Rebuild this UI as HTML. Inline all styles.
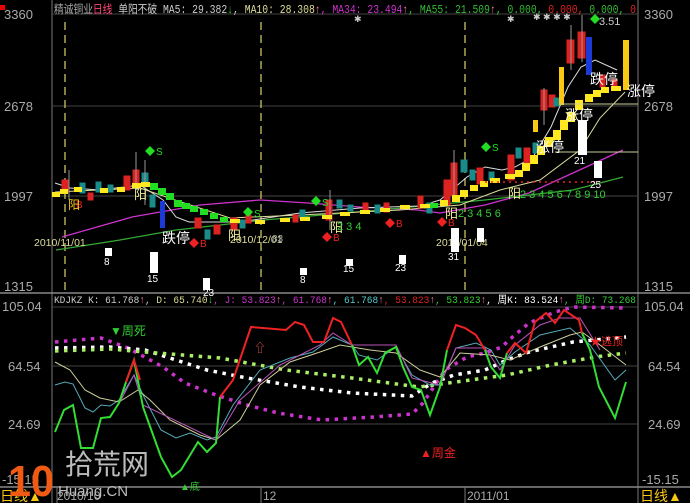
<!DOCTYPE html>
<html><head><meta charset="utf-8"><style>
body{margin:0;background:#000;width:690px;height:503px;overflow:hidden}
svg{display:block}
text{font-family:"Liberation Sans","Noto Sans CJK SC",sans-serif}
.m{font-family:"Liberation Mono","Noto Sans CJK SC",monospace}
</style></head><body>
<svg width="690" height="503" viewBox="0 0 690 503" xmlns="http://www.w3.org/2000/svg">
<rect width="690" height="503" fill="#000"/>
<line x1="52" y1="0" x2="52" y2="503" stroke="#777" stroke-width="1"/>
<line x1="638" y1="0" x2="638" y2="503" stroke="#777" stroke-width="1"/>
<line x1="0" y1="293" x2="690" y2="293" stroke="#888" stroke-width="1.5"/>
<line x1="0" y1="487" x2="690" y2="487" stroke="#888" stroke-width="1.5"/>
<g stroke="#444" stroke-width="1">
<line x1="52" y1="14" x2="638" y2="14"/>
<line x1="52" y1="106" x2="638" y2="106"/>
<line x1="52" y1="196" x2="638" y2="196"/>
<line x1="52" y1="307" x2="638" y2="307"/>
<line x1="52" y1="366" x2="638" y2="366"/>
<line x1="52" y1="424" x2="638" y2="424"/>
</g>
<g stroke="#dcd36a" stroke-width="1.2" stroke-dasharray="8 5">
<line x1="65" y1="22" x2="65" y2="293"/>
<line x1="261" y1="22" x2="261" y2="293"/>
<line x1="465" y1="22" x2="465" y2="293"/>
</g>
<g stroke="#777"><line x1="261" y1="487" x2="261" y2="503"/><line x1="465" y1="487" x2="465" y2="503"/><line x1="57" y1="487" x2="57" y2="503"/></g>
<g class="m" font-size="13" fill="#aaa">
<text x="4" y="19">3360</text><text x="4" y="111">2678</text><text x="4" y="201">1997</text><text x="4" y="291">1315</text>
<text x="644" y="19">3360</text><text x="644" y="111">2678</text><text x="644" y="201">1997</text><text x="644" y="291">1315</text>
<text x="2" y="311">105.04</text><text x="8" y="371">64.54</text><text x="8" y="429">24.69</text><text x="2" y="484">-15.15</text>
<text x="644" y="311">105.04</text><text x="648" y="371">64.54</text><text x="648" y="429">24.69</text><text x="642" y="484">-15.15</text>
</g>
<rect x="0" y="5" width="5" height="5" fill="#e00"/>
<text class="m" x="54" y="13" font-size="11.5" textLength="582" lengthAdjust="spacingAndGlyphs"><tspan fill="#aaa">精诚铜业</tspan><tspan fill="#f47">日线</tspan><tspan fill="#ccc"> 单阳不破 MA5: 29.382</tspan><tspan fill="#3c3">↓</tspan><tspan fill="#ccc">,</tspan><tspan fill="#dd9"> MA10: 28.308</tspan><tspan fill="#f7a">↑</tspan><tspan fill="#c3c">, MA34: 23.494</tspan><tspan fill="#f7a">↑</tspan><tspan fill="#3b3">, MA55: 21.509</tspan><tspan fill="#f7a">↑</tspan><tspan fill="#3b3">, 0.000,</tspan><tspan fill="#d22"> 0.000,</tspan><tspan fill="#3b3"> 0.000,</tspan><tspan fill="#d22"> 0</tspan></text>
<polyline fill="none" stroke="#c3c" stroke-width="1.3" points="62,237 132,217 200,205 260,200 308,203 360,207 418,210 440,213 485,205 529,193 573,173 623,150"/>
<polyline fill="none" stroke="#3a3" stroke-width="1.3" points="56,250 120,240 176,230 264,220 380,210 485,200 573,190 623,177"/>
<polyline fill="none" stroke="#ddd" stroke-width="1" points="55,183 70,188 100,190 140,185 163,200 176,217 189,222 210,222 240,222 300,213 360,208 420,206 440,200 467,177 485,167 502,170 515,167 533,157 551,127 568,87 581,67 595,60 617,70"/>
<polyline fill="none" stroke="#dd9" stroke-width="1" points="55,192 140,188 175,200 230,218 300,215 400,210 460,205 500,190 540,180 580,150 600,118 625,92"/>
<g>
<g fill="#d22" stroke="#d22">
<rect x="62" y="180" width="6" height="12"/><rect x="88" y="193" width="5" height="7"/><rect x="124" y="176" width="6" height="14"/><rect x="133" y="170" width="6" height="14"/>
<rect x="195" y="218" width="6" height="10"/><rect x="214" y="225" width="6" height="9"/><rect x="231" y="218" width="6" height="12"/><rect x="246" y="215" width="5" height="8"/>
<rect x="293" y="215" width="5" height="7"/><rect x="326" y="200" width="6" height="20"/><rect x="363" y="203" width="5" height="10"/><rect x="384" y="203" width="5" height="9"/>
<rect x="418" y="196" width="5" height="12"/><rect x="444" y="180" width="6" height="25"/><rect x="451" y="163" width="6" height="32"/><rect x="477" y="168" width="6" height="16"/>
<rect x="508" y="155" width="6" height="25"/><rect x="524" y="148" width="6" height="18"/><rect x="541" y="90" width="6" height="20"/><rect x="549" y="95" width="6" height="12"/>
<rect x="567" y="40" width="7" height="23"/><rect x="578" y="32" width="7" height="26"/><rect x="600" y="75" width="5" height="12"/><rect x="612" y="80" width="5" height="8"/>
</g>
<g fill="#1a8a8a" stroke="#1a8a8a">
<rect x="80" y="183" width="5" height="10"/><rect x="96" y="182" width="5" height="10"/><rect x="108" y="185" width="5" height="7"/><rect x="142" y="173" width="6" height="12"/>
<rect x="150" y="195" width="5" height="12"/><rect x="205" y="230" width="5" height="9"/><rect x="240" y="220" width="5" height="8"/><rect x="300" y="210" width="5" height="9"/>
<rect x="337" y="200" width="5" height="8"/><rect x="348" y="205" width="5" height="6"/><rect x="375" y="205" width="5" height="8"/><rect x="427" y="203" width="5" height="10"/>
<rect x="461" y="160" width="6" height="12"/><rect x="470" y="170" width="5" height="10"/><rect x="489" y="172" width="5" height="8"/><rect x="516" y="148" width="5" height="10"/><rect x="533" y="143" width="5" height="10"/><rect x="554" y="98" width="5" height="8"/>
</g>
<g stroke="#999" stroke-width="1">
<line x1="69" y1="170" x2="69" y2="200"/><line x1="136" y1="152" x2="136" y2="190"/><line x1="145" y1="160" x2="145" y2="205"/><line x1="330" y1="190" x2="330" y2="230"/><line x1="454" y1="150" x2="454" y2="200"/><line x1="544" y1="88" x2="544" y2="125"/><line x1="571" y1="25" x2="571" y2="70"/><line x1="582" y1="15" x2="582" y2="62"/>
</g>
<rect x="586" y="37" width="6" height="38" fill="#1c3ad8"/>
<rect x="160" y="201" width="5" height="27" fill="#1c3ad8"/>
<g fill="#f8c812"><rect x="559" y="67" width="5" height="38"/><rect x="623" y="40" width="6" height="50"/><rect x="533" y="120" width="5" height="12"/></g>
</g>
<g fill="#ffe820">
<rect x="52" y="192" width="8" height="5"/><rect x="60" y="189" width="8" height="5"/><rect x="74" y="187" width="8" height="5"/><rect x="100" y="188" width="8" height="5"/><rect x="117" y="187" width="8" height="5"/><rect x="132" y="183" width="9" height="5"/><rect x="141" y="182" width="9" height="5"/>
<rect x="230" y="219" width="10" height="4"/><rect x="255" y="220" width="10" height="4"/><rect x="280" y="218" width="10" height="4"/><rect x="300" y="217" width="10" height="4"/><rect x="322" y="215" width="10" height="4"/><rect x="340" y="212" width="10" height="4"/><rect x="360" y="210" width="10" height="4"/><rect x="380" y="208" width="10" height="4"/><rect x="400" y="205" width="10" height="4"/><rect x="420" y="204" width="10" height="4"/><rect x="440" y="200" width="8" height="6"/>
<rect x="452" y="195" width="8" height="7"/><rect x="460" y="190" width="8" height="7"/><rect x="470" y="185" width="8" height="6"/><rect x="480" y="181" width="8" height="6"/><rect x="490" y="178" width="10" height="5"/><rect x="505" y="174" width="10" height="5"/>
<rect x="515" y="170" width="8" height="7"/><rect x="522" y="163" width="8" height="8"/><rect x="530" y="155" width="8" height="9"/><rect x="537" y="146" width="8" height="9"/><rect x="545" y="137" width="8" height="10"/><rect x="553" y="130" width="8" height="10"/><rect x="560" y="120" width="8" height="10"/><rect x="567" y="112" width="8" height="10"/><rect x="575" y="100" width="8" height="10"/><rect x="585" y="94" width="8" height="8"/><rect x="593" y="90" width="8" height="7"/><rect x="601" y="87" width="8" height="6"/><rect x="611" y="86" width="10" height="5"/>
</g>
<g fill="#22dd22">
<rect x="150" y="183" width="8" height="7"/><rect x="158" y="188" width="8" height="7"/><rect x="166" y="193" width="8" height="7"/><rect x="174" y="200" width="8" height="7"/><rect x="182" y="203" width="8" height="6"/><rect x="190" y="206" width="8" height="6"/><rect x="200" y="209" width="8" height="6"/><rect x="210" y="213" width="8" height="6"/><rect x="220" y="217" width="8" height="5"/><rect x="430" y="203" width="8" height="5"/>
</g>
<g stroke="#ccc" stroke-width="1"><line x1="560" y1="104" x2="638" y2="104" stroke="#cc9"/><line x1="555" y1="152" x2="638" y2="152" stroke="#cc9"/></g>
<line x1="485" y1="182" x2="600" y2="182" stroke="#e22" stroke-dasharray="2 4" stroke-width="1.5"/>
<g fill="#2d2"><path d="M150 146l5 5-5 5-5-5z"/><path d="M486 142l5 5-5 5-5-5z"/><path d="M248 207l5 5-5 5-5-5z"/><path d="M316 196l5 5-5 5-5-5z"/><path d="M595 14l5 5-5 5-5-5z"/></g>
<g fill="#2d2" font-size="10"><text x="156" y="155">S</text><text x="492" y="151">S</text><text x="254" y="217">S</text><text x="322" y="206">S</text></g>
<g fill="#e22"><path d="M194 238l5 5-5 5-5-5z"/><path d="M327 232l5 5-5 5-5-5z"/><path d="M390 218l5 5-5 5-5-5z"/><path d="M442 217l5 5-5 5-5-5z"/></g>
<g fill="#e22" font-size="10"><text x="200" y="247">B</text><text x="333" y="241">B</text><text x="396" y="227">B</text><text x="448" y="226">B</text><text x="76" y="208">B</text></g>
<g font-size="13"><text x="68" y="209" fill="#f8c812" font-size="12">阳</text><text x="134" y="199" fill="#ee9">阳</text><text x="228" y="240" fill="#ee9">阳</text><text x="330" y="232" fill="#ee9">阳</text><text x="445" y="218" fill="#ee9">阳</text><text x="508" y="198" fill="#ee9">阳</text>
<text x="162" y="243" fill="#fff" font-size="14">跌停</text><text x="590" y="84" fill="#fff" font-size="14">跌停</text><text x="627" y="96" fill="#fff" font-size="14">涨停</text><text x="565" y="120" fill="#fff" font-size="14">涨停</text><text x="536" y="152" fill="#fff" font-size="14">涨停</text></g>
<g fill="#3c3" font-size="11" class="m"><text x="337" y="230">2 3 4</text><text x="458" y="217">2 3 4 5 6</text><text x="520" y="198">2 3 4 5 6 7 8 9 10</text></g>
<g fill="#dd9" font-size="10.5" class="m"><text x="34" y="246">2010/11/01</text><text x="230" y="243">2010/12/01</text><text x="436" y="246">2011/01/04</text></g>
<text x="272" y="242" fill="#aaa" font-size="10">83</text>
<text x="599" y="25" fill="#ccc" font-size="11">3.51</text>
<g fill="#ccc" font-size="9"><text x="354" y="22">✱</text><text x="507" y="22">✱</text><text x="533" y="20">✱ ✱ ✱ ✱</text></g>
<g fill="#fff"><rect x="105" y="248" width="7" height="8"/><rect x="150" y="252" width="8" height="21"/><rect x="203" y="278" width="7" height="12"/><rect x="300" y="268" width="7" height="7"/><rect x="346" y="259" width="7" height="7"/><rect x="399" y="255" width="7" height="9"/><rect x="451" y="228" width="8" height="24"/><rect x="477" y="228" width="7" height="14"/><rect x="578" y="120" width="9" height="35"/><rect x="594" y="161" width="8" height="17"/></g>
<g fill="#fff" font-size="10" class="m"><text x="104" y="265">8</text><text x="147" y="282">15</text><text x="300" y="283">8</text><text x="343" y="272">15</text><text x="395" y="271">23</text><text x="448" y="260">31</text><text x="574" y="164">21</text><text x="590" y="188">25</text><text x="203" y="296">23</text></g>
<text class="m" x="54" y="303" font-size="10.5" textLength="582" lengthAdjust="spacingAndGlyphs"><tspan fill="#ccc">KDJKZ K: 61.768</tspan><tspan fill="#f7a">↑</tspan><tspan fill="#ccc">,</tspan><tspan fill="#dd9"> D: 65.740</tspan><tspan fill="#3c3">↓</tspan><tspan fill="#c3c">, J: 53.823</tspan><tspan fill="#f7a">↑</tspan><tspan fill="#c3c">, 61.768</tspan><tspan fill="#f7a">↑</tspan><tspan fill="#5cc">, 61.768</tspan><tspan fill="#f7a">↑</tspan><tspan fill="#d22">, 53.823</tspan><tspan fill="#f7a">↑</tspan><tspan fill="#3c3">, 53.823</tspan><tspan fill="#f7a">↑</tspan><tspan fill="#fff">, 周K: 83.524</tspan><tspan fill="#f7a">↑</tspan><tspan fill="#3c3">, 周D: 73.268</tspan></text>
<g fill="none" stroke-width="3.5" stroke-dasharray="3.5 5.5">
<polyline stroke="#c3c" points="55,342 101,338 128,348 163,367 185,383 216,395 247,405 278,413 322,420 374,417 412,414 423,403 445,370 467,357 485,353 502,347 509,340 529,323 555,312 573,307 626,308"/>
<polyline stroke="#fff" points="55,348 110,347 145,350 176,360 207,370 247,378 300,387 352,393 412,396 432,383 454,375 485,370 507,360 529,352 573,342 626,337"/>
<polyline stroke="#ae6" points="55,351 110,349 145,352 220,358 286,370 352,378 419,387 485,378 507,375 551,365 595,357 626,353"/>
</g>
<polyline fill="none" stroke="#5ab" stroke-width="1" points="55,385 65,382 73,384 85,408 93,412 101,405 110,406 119,400 134,375 143,395 161,430 176,438 190,433 207,440 216,437 233,405 260,370 290,358 313,352 333,337 352,345 359,355 377,360 396,347 412,375 430,385 440,385 456,348 476,343 491,350 500,365 515,352 540,335 570,328 590,345 615,380 626,370"/>
<polyline fill="none" stroke="#cc9" stroke-width="1" points="55,362 70,370 85,390 100,398 119,402 138,390 150,400 170,420 200,435 216,440 240,420 260,385 290,362 320,352 340,345 370,350 396,353 420,370 440,377 460,353 490,355 510,360 540,347 570,335 582,332 600,345 626,365"/>
<polyline fill="none" stroke="#b5b" stroke-width="1" points="120,402 134,375 143,405 216,440 240,400 280,365 320,345 333,333 352,345 396,345 412,378 440,385 456,348 485,348 500,370 515,345 540,325 560,318 580,318 600,350"/>
<polyline fill="none" stroke="#3d3" stroke-width="2" points="55,432 64,410 73,405 81,448 93,448 101,418 110,417 119,403 126,382 134,360 143,407 161,457 172,477 181,470 198,442 207,452 216,443 220,397"/>
<polyline fill="none" stroke="#e22" stroke-width="2" points="126,382 134,360 140,380"/><polyline fill="none" stroke="#e22" stroke-width="2" points="220,397 233,380 251,327 286,330 295,322 304,325 313,342 324,342 333,318 341,322 352,345"/>
<polyline fill="none" stroke="#3d3" stroke-width="2" points="352,345 359,365 368,357 377,373 385,353 396,347 403,367 412,387 421,390 430,415 440,387 447,350"/>
<polyline fill="none" stroke="#e22" stroke-width="2" points="447,350 456,325 465,328 476,335 485,350"/>
<polyline fill="none" stroke="#3d3" stroke-width="2" points="485,350 491,367 500,378 507,353"/>
<polyline fill="none" stroke="#e22" stroke-width="2" points="507,353 515,343 526,353 535,322 546,313 555,323 564,310 579,320 582,333"/>
<polyline fill="none" stroke="#3d3" stroke-width="2" points="582,333 590,350 599,387 615,418 626,382"/>
<text x="110" y="335" fill="#3c3" font-size="12">▼周死</text>
<text x="420" y="457" fill="#e22" font-size="12">▲周金</text>
<text x="590" y="345" fill="#e22" font-size="11">★逃顶</text>
<text x="254" y="352" fill="#e55" font-size="12">⇧</text>
<text x="180" y="490" fill="#3c3" font-size="10">▲底</text>
<g class="m" font-size="12" fill="#aaa"><text x="57" y="500">2010/10</text><text x="263" y="500">12</text><text x="467" y="500">2011/01</text></g>
<text x="0" y="501" fill="#f8c812" font-size="14">日线▲</text>
<text x="640" y="501" fill="#f8c812" font-size="14">日线▲</text>
<text x="8" y="496" fill="#f05a14" font-size="44" font-weight="bold" font-family="Liberation Sans,sans-serif" textLength="46" lengthAdjust="spacingAndGlyphs">10</text>
<text x="65" y="474" fill="#bbb" font-size="28">拾荒网</text>
<text x="58" y="496" fill="#bbb" font-size="15">Huang.CN</text>
</svg>
</body></html>
